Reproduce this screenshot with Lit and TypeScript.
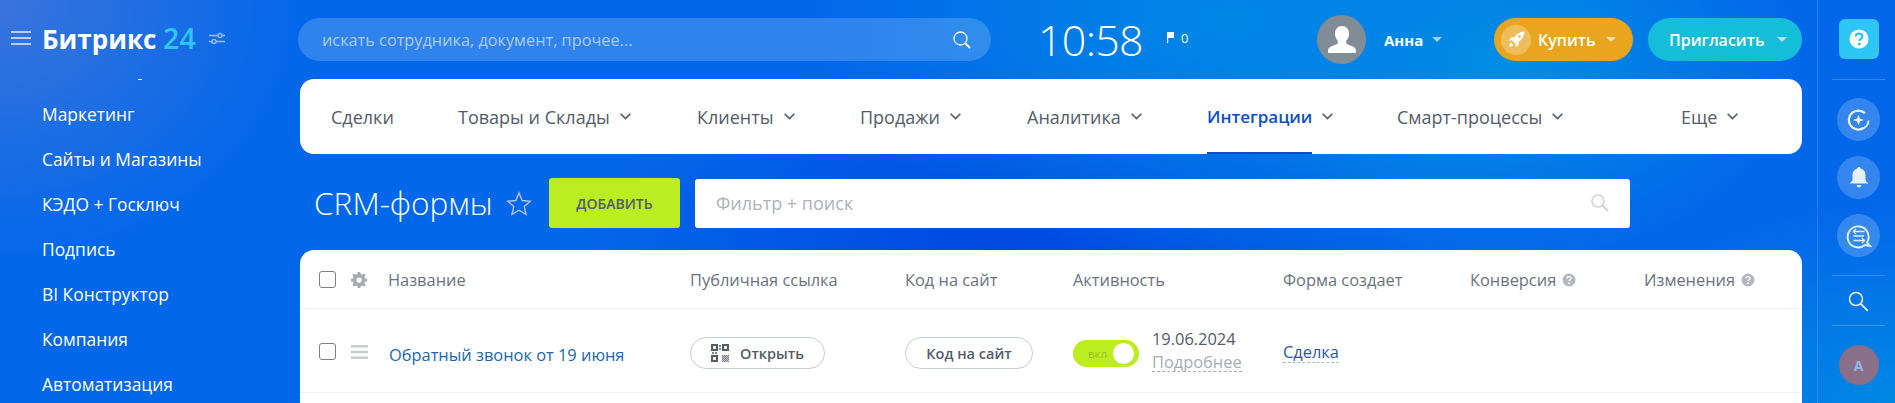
import { LitElement, html, css, svg } from "lit";
import { customElement } from "lit/decorators.js";

const chev = html`<svg class="chev" viewBox="0 0 12 8" width="13" height="9"><path d="M1.500 1.500 6 6l4.500-4.500" fill="none" stroke="#535c69" stroke-width="1.500"/></svg>`;
const qmark = html`<svg class="hint" viewBox="0 0 14 14" width="14" height="14"><circle cx="7" cy="7" r="6.500" fill="#b3b8bf"/><path d="M5 5.400C5 4.200 5.900 3.600 7 3.600s2 .7 2 1.700c0 1.500-1.900 1.400-1.900 2.800" fill="none" stroke="#fff" stroke-width="1.300"/><circle cx="7.100" cy="10.200" r=".9" fill="#fff"/></svg>`;

const menu = ["Маркетинг", "Сайты и Магазины", "КЭДО + Госключ", "Подпись", "BI Конструктор", "Компания", "Автоматизация"];
const tabs = [
  { t: "Товары и Склады", w: 239 },
  { t: "Клиенты", w: 163 },
  { t: "Продажи", w: 167 },
  { t: "Аналитика", w: 180 },
];
const dither: [number, number][] = [];
for (let j = 0; j < 7; j++) for (let i = 0; i < 7; i++) if ((i + j) % 2 === 0) dither.push([11 + i, 11 + j]);

@customElement("app-root")
export class AppRoot extends LitElement {
  static styles = css`
    :host { display: block; width: 1895px; height: 403px; overflow: hidden; font-family: "Open Sans", sans-serif; color: #fff; }
    .page { display: flex; width: 1895px; height: 403px; overflow: hidden;
      background:
        radial-gradient(420px 240px at 1230px 20px, #0088e6 0%, rgba(0,136,230,0) 100%),
        radial-gradient(420px 200px at 1000px 250px, #0048e0 0%, rgba(0,72,224,0) 100%),
        radial-gradient(300px 200px at 1500px 60px, #0090e4 0%, rgba(0,144,228,0) 100%),
        radial-gradient(300px 260px at 0 0, #3a74dc 0%, rgba(58,116,220,0) 100%),
        radial-gradient(300px 200px at 1895px 403px, #0088e4 0%, rgba(0,136,228,0) 100%),
        #0367ea; }
    svg { display: block; flex: none; }

    .side { width: 298px; flex: none; overflow: hidden; height: 403px; }
    .logo { display: flex; align-items: center; height: 78px; padding-left: 11px; box-sizing: border-box; padding-bottom: 2px; }
    .burger { width: 20px; display: flex; flex-direction: column; gap: 4px; margin-right: 11px; }
    .burger i { display: block; height: 2px; background: #b5cff5; }
    .logo b { font: 700 26px/1 "Open Sans", sans-serif; white-space: nowrap; }
    .logo b span { color: #2fc6f6; font-weight: 600; font-size: 28.500px; }
    .tune { margin-left: 13px; }
    .tick { width: 4px; height: 1px; background: #fff; margin: 1px 0 0 138px; }
    .menu { display: flex; flex-direction: column; padding-left: 42px; margin-top: 12px; }
    .menu div { height: 45px; line-height: 45px; font-size: 17.4px; white-space: nowrap; flex: none; }

    .main { width: 1519px; flex: none; box-sizing: border-box; padding-top: 18px; }
    .top { display: flex; align-items: center; height: 43px; }
    .search { width: 693px; height: 43px; border-radius: 22px; background: rgba(255,255,255,.18); display: flex; align-items: center; justify-content: space-between; padding: 0 19px 0 24px; box-sizing: border-box; font-size: 16.3px; color: #a9cdf8; flex: none; }
    .clock { font: 300 43px/43px "Open Sans", sans-serif; margin-left: 47px; width: 113px; letter-spacing: -.7px; flex: none; }
    .flag { display: flex; align-items: center; gap: 6px; margin-left: 16px; width: 150px; font-size: 13px; margin-top: -4px; flex: none; }
    .ava { width: 49px; height: 49px; border-radius: 50%; background: #828c96; flex: none; display: flex; align-items: center; justify-content: center; overflow: hidden; }
    .name { font-size: 15px; font-weight: 700; margin-left: 18px; width: 82px; flex: none; display: flex; align-items: center; gap: 9px; }
    .tri { width: 0; height: 0; border-left: 5px solid transparent; border-right: 5px solid transparent; border-top: 5px solid rgba(255,255,255,.65); flex: none; }
    .name .tri { border-top-color: #a9cdf8; }
    .btn { height: 43px; border-radius: 22px; display: flex; align-items: center; font-size: 16px; font-weight: 600; box-sizing: border-box; flex: none; }
    .buy { width: 139px; background: #e9a51e; margin-left: 28px; padding-left: 7px; }
    .rocket { width: 30px; height: 30px; border-radius: 50%; background: rgba(255,255,255,.28); display: flex; align-items: center; justify-content: center; margin-right: 7px; }
    .buy .tri { margin-left: 10px; }
    .inv { width: 154px; background: #14bdd8; margin-left: 15px; padding-left: 21px; }
    .inv .tri { margin-left: 12px; }

    .nav { margin: 18px 0 0 2px; width: 1502px; height: 75px; border-radius: 14px; background: #fff; display: flex; align-items: stretch; color: #535c69; font-size: 18px; box-sizing: border-box; padding-left: 31px; }
    .tab { display: flex; align-items: center; gap: 9px; white-space: nowrap; flex: none; }
    .tab.active { font-weight: 600; font-size: 17px; align-items: stretch; }
    .tab.active .chev { align-self: center; }
    .tab.active u { display: flex; align-items: center; text-decoration: none; color: #0b4fc4; border-bottom: 2px solid #0b4fc4; box-sizing: border-box; padding-top: 2px; }

    .title { display: flex; align-items: center; height: 50px; margin-top: 24px; }
    h1 { font: 300 31.6px/1 "Open Sans", sans-serif; margin: 0 0 0 16px; width: 180px; flex: none; white-space: nowrap; }
    .star { margin-left: 12px; }
    .add { width: 131px; height: 50px; border-radius: 3px; background: #bbed21; color: #535c69; font-size: 14px; font-weight: 600; display: flex; align-items: center; justify-content: center; margin-left: 17px; flex: none; }
    .filter { width: 935px; height: 49px; border-radius: 3px; background: #fff; margin-left: 15px; display: flex; align-items: center; justify-content: space-between; padding: 0 20px 0 21px; box-sizing: border-box; color: #aeb3ba; font-size: 18px; flex: none; }

    .card { margin: 22px 0 0 2px; width: 1502px; height: 160px; background: #fff; border-radius: 14px 14px 0 0; color: #535c69; font-size: 16.4px; }
    .row { display: grid; grid-template-columns: 88px 302px 215px 168px 210px 187px 174px 1fr; align-items: center; border-bottom: 1px solid #eef0f1; white-space: nowrap; box-sizing: border-box; }
    .head { height: 59px; color: #6a737f; padding-top: 1px; }
    .body { height: 84px; padding-top: 5px; }
    .ck { display: flex; align-items: center; padding-left: 19px; gap: 15px; }
    .body .ck { margin-top: -3px; }
    .box { width: 15px; height: 15px; border: 1px solid #7a8087; border-radius: 3px; flex: none; }
    .hcell { display: flex; align-items: center; gap: 6px; }
    .link { color: #2067b0; padding: 3px 0 0 1px; }
    .pill { height: 32px; border: 1px solid #c6cdd3; border-radius: 16px; display: inline-flex; align-items: center; justify-content: center; box-sizing: border-box; font-weight: 600; font-size: 14.5px; color: #535c69; }
    .open { width: 135px; gap: 11px; }
    .code { width: 128px; }
    .act { display: flex; align-items: center; gap: 13px; }
    .toggle { width: 66px; height: 27px; border-radius: 14px; background: #bbed21; position: relative; font-size: 11.5px; color: #9cc322; line-height: 27px; padding-left: 15px; box-sizing: border-box; flex: none; }
    .toggle i { position: absolute; right: 5px; top: 3px; width: 21px; height: 21px; border-radius: 50%; background: #fff; }
    .dates { display: flex; flex-direction: column; align-items: flex-start; line-height: 28px; margin-top: -10px; }
    .more { color: #a8adb4; border-bottom: 1px dashed #a8adb4; line-height: 18px; }
    .deal { color: #1f56ad; border-bottom: 1px dashed #9cbde6; line-height: 20px; }
    .dealc { display: flex; margin-top: -2px; }

    .right { width: 78px; flex: none; display: flex; flex-direction: column; align-items: center; border-left: 1px solid rgba(255,255,255,.12); box-sizing: border-box; height: 403px; padding: 19px 0 0 4px; }
    .help { width: 40px; height: 40px; border-radius: 6px; background: #2fc6f6; display: flex; align-items: center; justify-content: center; flex: none; }
    .sep { width: 53px; height: 1px; background: rgba(255,255,255,.2); flex: none; }
    .s1 { margin-top: 20px; } .s2 { margin-top: 18px; } .s3 { margin-top: 13px; }
    .circ { width: 43px; height: 43px; border-radius: 50%; background: rgba(255,255,255,.2); display: flex; align-items: center; justify-content: center; flex: none; margin-top: 15px; }
    .c1 { margin-top: 18px; }
    .find { margin-top: 15px; }
    .u { width: 40px; height: 40px; border-radius: 50%; background: #8a6f88; color: #8fb8ea; font-weight: 700; font-size: 14px; display: flex; align-items: center; justify-content: center; flex: none; margin-top: 19px; }
  `;

  render() {
    return html`<div class="page">
      <aside class="side">
        <div class="logo">
          <div class="burger"><i></i><i></i><i></i></div>
          <b>Битрикс <span>24</span></b>
          <svg class="tune" width="16" height="13" viewBox="0 0 16 13" fill="none" stroke="#9dbcf0" stroke-width="1.400"><path d="M0 3.500h9M13 3.500h3M0 9.500h3M7 9.500h9"/><circle cx="11" cy="3.500" r="2"/><circle cx="5" cy="9.500" r="2"/></svg>
        </div>
        <div class="tick"></div>
        <div class="menu">${menu.map((m) => html`<div>${m}</div>`)}</div>
      </aside>

      <main class="main">
        <div class="top">
          <div class="search"><span>искать сотрудника, документ, прочее...</span>
            <svg width="20" height="20" viewBox="0 0 20 20" fill="none" stroke="#fff"><circle cx="8.500" cy="8.500" r="6.500" stroke-width="1.300"/><path d="m13 13 5 5" stroke-width="2"/></svg>
          </div>
          <div class="clock">10:58</div>
          <div class="flag"><svg width="8" height="11" viewBox="0 0 8 11"><path d="M0 0h7v6H1.200v5H0z" fill="#fff"/></svg><span>0</span></div>
          <div class="ava"><svg width="30" height="32" viewBox="0 0 30 32"><path d="M15 2c4.500 0 7 3.200 7 7.500 0 3-1 5.500-2.700 7.200v3c2.600 1.600 8.700 2.300 9.700 6.300v3H1v-3c1-4 7-4.700 9.700-6.300v-3C9 15 8 12.500 8 9.500 8 5.200 10.500 2 15 2z" fill="#fff"/></svg></div>
          <div class="name">Анна <span class="tri"></span></div>
          <div class="btn buy"><span class="rocket"><svg width="17" height="17" viewBox="0 0 16 16" fill="#fff"><path d="M15.500.5c-4 .2-7 1.700-9.300 5.200L3 6 .7 9l3-.4 3.700 3.700L7 15.300l3-2.300.3-3.200C13.800 7.500 15.300 4.500 15.500.5z"/><path d="M3 11c-1 .6-1.600 1.800-1.700 3.700 1.900-.1 3.100-.7 3.700-1.700z"/><circle cx="10.800" cy="5.200" r="1.300" fill="#efc064"/></svg></span>Купить<span class="tri"></span></div>
          <div class="btn inv">Пригласить<span class="tri"></span></div>
        </div>

        <nav class="nav">
          <div class="tab" style="width:127px">Сделки</div>
          ${tabs.map((t) => html`<div class="tab" style="width:${t.w}px">${t.t} ${chev}</div>`)}
          <div class="tab active" style="width:190px"><u>Интеграции</u>${chev}</div>
          <div class="tab" style="width:284px">Смарт-процессы ${chev}</div>
          <div class="tab">Еще ${chev}</div>
        </nav>

        <div class="title">
          <h1>CRM-формы</h1>
          <svg class="star" width="26" height="25" viewBox="0 0 26 25" fill="none" stroke="#b7c3e4" stroke-width="1.400"><path d="m13 2 3.200 7.500 8 .7-6 5.300 1.800 7.900L13 19.200l-7 4.200 1.800-7.900-6-5.300 8-.7z"/></svg>
          <div class="add">ДОБАВИТЬ</div>
          <div class="filter"><span>Фильтр + поиск</span>
            <svg width="20" height="20" viewBox="0 0 20 20" fill="none" stroke="#cfd3d8"><circle cx="8" cy="8" r="6" stroke-width="1.600"/><path d="m12.500 12.500 5.500 5.500" stroke-width="2"/></svg>
          </div>
        </div>

        <section class="card">
          <div class="row head">
            <div class="ck"><span class="box"></span>
              <svg width="16" height="16" viewBox="0 0 16 16"><path fill="#a6abb2" fill-rule="evenodd" d="M6.700 0h2.600l.4 2.100 1.300.6 1.800-1.200 1.800 1.800-1.200 1.800.6 1.300 2 .4v2.600l-2 .4-.6 1.300 1.200 1.800-1.800 1.800-1.800-1.200-1.300.6-.4 2.100H6.700l-.4-2.100-1.300-.6-1.800 1.200-1.800-1.800 1.200-1.800L2 9.800 0 9.400V6.800l2-.4.6-1.300-1.200-1.800 1.800-1.800L5 2.700l1.300-.6zM8 5.500a2.600 2.600 0 1 0 0 5.200 2.600 2.600 0 0 0 0-5.200z"/></svg>
            </div>
            <div>Название</div><div>Публичная ссылка</div><div>Код на сайт</div><div>Активность</div><div>Форма создает</div>
            <div class="hcell">Конверсия ${qmark}</div><div class="hcell">Изменения ${qmark}</div>
          </div>
          <div class="row body">
            <div class="ck"><span class="box"></span>
              <svg width="18" height="14" viewBox="0 0 18 14" fill="#c9ccd0"><path d="M0 0h17v2.500H0zM0 5.700h17v2.500H0zM0 11.400h17v2.500H0z"/></svg>
            </div>
            <div class="link">Обратный звонок от 19 июня</div>
            <div><span class="pill open">
              <svg width="18" height="18" viewBox="0 0 18 18" fill="#535c69">
                ${[[0, 0], [11, 0], [0, 11]].map(([x, y]) => svg`<path fill-rule="evenodd" d="M${x} ${y}h7v7h-7zM${x + 2} ${y + 2}v3h3v-3z"/>`)}
                <path d="M8 1h2v2H8zM8 4h2v2H8zM1 8h2v2H1zM4 8h2v2H4z" opacity=".75"/>
                <rect x="11" y="11" width="7" height="7" opacity=".3"/>
                ${dither.map(([x, y]) => svg`<rect x=${x} y=${y} width="1" height="1" opacity=".8"/>`)}
              </svg>Открыть</span></div>
            <div><span class="pill code">Код на сайт</span></div>
            <div class="act"><div class="toggle">вкл<i></i></div>
              <div class="dates"><span>19.06.2024</span><span class="more">Подробнее</span></div></div>
            <div class="dealc"><span class="deal">Сделка</span></div>
            <div></div><div></div>
          </div>
        </section>
      </main>

      <aside class="right">
        <div class="help"><svg width="20" height="20" viewBox="0 0 20 20"><circle cx="10" cy="10" r="9.500" fill="#fff"/><path d="M6.800 7.600C6.800 5.700 8.200 4.700 10 4.700s3.300 1 3.300 2.800c0 2.500-3.100 2.300-3.100 4.600" fill="none" stroke="#2fc6f6" stroke-width="2.200"/><circle cx="10.200" cy="15" r="1.500" fill="#2fc6f6"/></svg></div>
        <div class="sep s1"></div>
        <div class="circ c1"><svg width="24" height="24" viewBox="0 0 24 24" fill="none" stroke="#e6f1fd" stroke-width="2.200"><path d="M18 5.300A9.500 9.500 0 1 0 16.500 20"/><path d="M21.500 12.500A8 8 0 0 1 14 20.800" stroke-width="1.800"/><path d="M11.500 6.500l1.400 4.100 4.100 1.400-4.100 1.400-1.400 4.100-1.400-4.100L6 12l4.100-1.400z" fill="#e6f1fd" stroke="none"/></svg></div>
        <div class="circ"><svg width="20" height="22" viewBox="0 0 20 22"><path d="M10 0c1 0 1.700.6 1.800 1.500C15 2.300 16.500 5 16.500 8v4c0 2 1.200 3.200 3 4.500H.5c1.800-1.300 3-2.500 3-4.500V8c0-3 1.500-5.700 4.700-6.500C8.300.6 9 0 10 0z" fill="#e6f1fd"/><path d="M7.500 18h5c-.4 1.500-1.300 2.300-2.500 2.300S7.900 19.500 7.500 18z" fill="#e6f1fd"/></svg></div>
        <div class="circ"><svg width="26" height="26" viewBox="0 0 26 26" fill="none" stroke="#e6f1fd"><path d="M21 19.500A10.500 10.500 0 1 0 18.800 22l5.200 1z" stroke-width="1.900"/><path d="M7.500 8.500h11M7.500 13h10.500M7.500 17.500h11" stroke-width="1.500"/><path d="M10 6 7.500 8.500 10 11M16 15l2.500 2.500L16 20" stroke-width="1.300"/></svg></div>
        <div class="sep s2"></div>
        <svg class="find" width="21" height="21" viewBox="0 0 21 21" fill="none" stroke="#eaf3fe"><circle cx="8" cy="8" r="6.500" stroke-width="1.500"/><path d="m12.800 12.800 7 7" stroke-width="1.900"/></svg>
        <div class="sep s3"></div>
        <div class="u">A</div>
      </aside>
    </div>`;
  }
}
